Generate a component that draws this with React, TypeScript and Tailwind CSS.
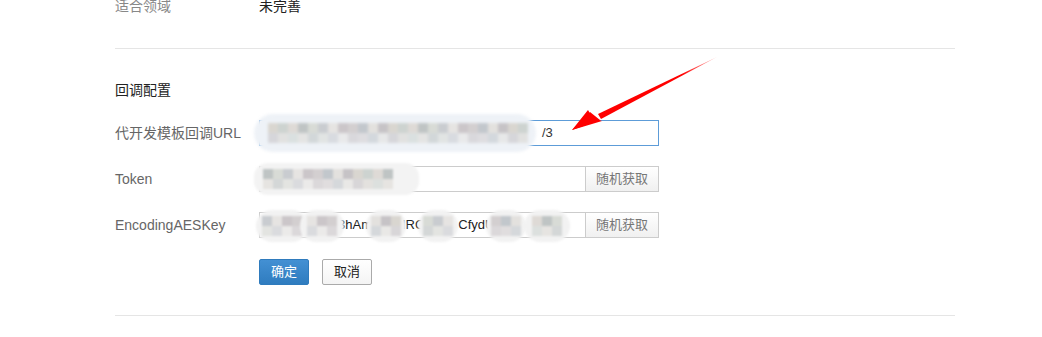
import React from 'react'

const font = { fontFamily: '"Liberation Sans", "Noto Sans CJK SC", sans-serif' }

const greys = ['#d9d6d0', '#c9ccd0', '#e3e1de', '#bfc4c4', '#d3cfd0', '#cdd3d0', '#e6e4e2', '#c6c3c6', '#d8dbd6', '#c2c7cc', '#dedad6', '#cbc6c9']

function Pixels({ count, offset = 0 }: { count: number; offset?: number }) {
  return (
    <div className="flex flex-col">
      {[0, 1].map((r) => (
        <div key={r} className="flex">
          {Array.from({ length: count }).map((_, i) => (
            <div
              key={i}
              className="h-[10px] w-[10px]"
              style={{ background: greys[(i * 5 + r * 7 + offset) % greys.length], opacity: r === 1 ? 0.6 : 1 }}
            />
          ))}
        </div>
      ))}
    </div>
  )
}

function Label({ children }: { children: React.ReactNode }) {
  return <div className="w-[144px] shrink-0 text-[14px] text-[#666]">{children}</div>
}

function RandomBtn() {
  return (
    <button className="relative z-10 h-full w-[73px] shrink-0 border-l border-[#ccc] bg-gradient-to-b from-white to-[#f0f0f0] text-[13px] text-[#777]">
      随机获取
    </button>
  )
}

// blurred patches over the AES key, left offset inside the input and pixel count
const aesBlobs = [
  { left: -4, w: 52, n: 4, o: 1 },
  { left: 40, w: 44, n: 3, o: 6 },
  { left: 106, w: 40, n: 3, o: 2 },
  { left: 158, w: 40, n: 3, o: 8 },
  { left: 226, w: 40, n: 3, o: 4 },
  { left: 264, w: 46, n: 3, o: 10 },
]

export default function App() {
  return (
    <div className="relative h-[337px] w-[1042px] overflow-hidden bg-white" style={font}>
      <div className="w-[955px] pl-[115px]">
        <div className="mt-[-4px] flex h-[20px] items-center text-[14px]">
          <div className="w-[144px] text-[#888]">适合领域</div>
          <div className="text-[#222]">未完善</div>
        </div>
        <div className="mt-[32px] h-px bg-[#e5e5e5]" />

        <div className="mt-[31px] text-[14px] text-[#222]">回调配置</div>

        <div className="mt-[19px] flex flex-col gap-[20px]">
          <div className="flex h-[26px] items-center">
            <Label>代开发模板回调URL</Label>
            <div className="relative flex h-full w-[400px] items-center border border-[#5d9cd8] px-[8px] text-[13px] text-[#333]">
              <div className="absolute left-[-6px] top-[-7px] flex h-[38px] w-[282px] items-center rounded-[20px] bg-[#eef2f7] pl-[14px] blur-[1.5px]">
                <Pixels count={26} />
              </div>
              <span className="ml-[274px]">/3</span>
            </div>
          </div>

          <div className="flex h-[26px] items-center">
            <Label>Token</Label>
            <div className="relative flex h-full w-[400px] border border-[#ccc]">
              <div className="flex-1" />
              <div className="absolute left-[-6px] top-[-4px] flex h-[32px] w-[165px] items-center rounded-[14px] bg-[#f3f3f3] pl-[9px] blur-[1px]">
                <Pixels count={13} offset={3} />
              </div>
              <RandomBtn />
            </div>
          </div>

          <div className="flex h-[26px] items-center">
            <Label>EncodingAESKey</Label>
            <div className="relative flex h-full w-[400px] border border-[#ccc]">
              <div className="flex flex-1 items-center pl-[8px] text-[13px] text-[#222]">
                <span className="ml-[70px]">3hAm</span>
                <span className="ml-[30px]">IRC</span>
                <span className="ml-[34px]">CfydUt</span>
              </div>
              {aesBlobs.map((b, i) => (
                <div
                  key={i}
                  className="absolute top-[-3px] flex h-[32px] items-center justify-center rounded-full bg-[#f2f2f2] blur-[0.8px]"
                  style={{ left: b.left, width: b.w }}
                >
                  <Pixels count={b.n} offset={b.o} />
                </div>
              ))}
              <RandomBtn />
            </div>
          </div>
        </div>

        <div className="ml-[144px] mt-[21px] flex gap-[13px]">
          <button className="h-[26px] w-[50px] rounded-[2px] border border-[#2f7bbd] bg-gradient-to-b from-[#4390d3] to-[#2f7cbf] text-[13px] text-white">
            确定
          </button>
          <button className="h-[26px] w-[50px] rounded-[2px] border border-[#aaa] bg-gradient-to-b from-white to-[#f4f4f4] text-[13px] text-[#222]">
            取消
          </button>
        </div>

        <div className="mt-[30px] h-px bg-[#e5e5e5]" />
      </div>

      <svg className="pointer-events-none absolute left-0 top-0" width="1042" height="337">
        <defs>
          <linearGradient id="fade" x1="717" y1="57" x2="600" y2="115" gradientUnits="userSpaceOnUse">
            <stop offset="0" stopColor="#ff0000" stopOpacity="0.25" />
            <stop offset="0.3" stopColor="#ff0000" stopOpacity="1" />
          </linearGradient>
        </defs>
        <polygon points="717,57 598,114 601,119" fill="url(#fade)" />
        <polygon points="572,130 588,110 592,117 602,121" fill="#ff0000" />
        <polygon points="572,130 590,112 600,120" fill="#ff0000" />
      </svg>
    </div>
  )
}
